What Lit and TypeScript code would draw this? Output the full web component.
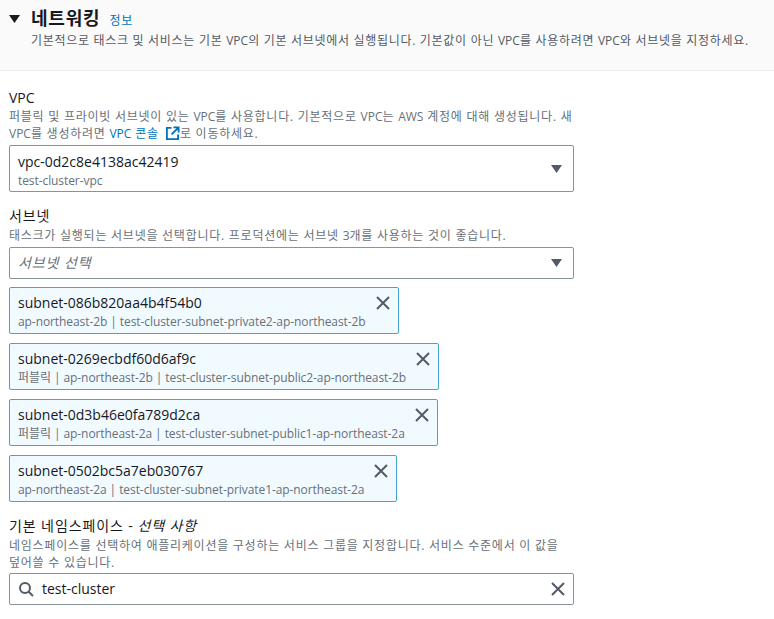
import { LitElement, html, css } from "lit";
import { customElement } from "lit/decorators.js";

const caret = html`<svg class="caret" width="11" height="8" viewBox="0 0 12 8" preserveAspectRatio="none"><path d="M0 0h12L6 8z" fill="currentColor"/></svg>`;
const closeIcon = html`<svg class="x" width="16" height="16" viewBox="0 0 16 16"><path d="M2 2l12 12M14 2L2 14" fill="none" stroke="#545b64" stroke-width="2"/></svg>`;

/* Hangul runs get their own tracking; Latin runs keep the font's natural spacing. */
const k = (text: string) =>
  text.split(/([A-Za-z0-9-]+)/).map((part, i) => (i % 2 ? part : html`<span class="k">${part}</span>`));

const tokens = [
  ["subnet-086b820aa4b4f54b0", "ap-northeast-2b | test-cluster-subnet-private2-ap-northeast-2b"],
  ["subnet-0269ecbdf60d6af9c", "퍼블릭 | ap-northeast-2b | test-cluster-subnet-public2-ap-northeast-2b"],
  ["subnet-0d3b46e0fa789d2ca", "퍼블릭 | ap-northeast-2a | test-cluster-subnet-public1-ap-northeast-2a"],
  ["subnet-0502bc5a7eb030767", "ap-northeast-2a | test-cluster-subnet-private1-ap-northeast-2a"],
];

@customElement("app-root")
export class AppRoot extends LitElement {
  static styles = css`
    :host {
      display: block;
      width: 774px;
      height: 619px;
      overflow: hidden;
      background: #fff;
      color: #16191f;
      font-family: "Open Sans", "Noto Sans CJK KR", sans-serif;
      font-size: 14px;
      line-height: 20px;
    }
    .k { letter-spacing: var(--ks, 0); }
    .head {
      box-sizing: border-box;
      height: 71px;
      background: #fafafa;
      border-bottom: 1px solid #eaeded;
      display: flex;
      padding: 6px 0 0 9px;
      gap: 11px;
    }
    .head .caret { color: #16191f; margin-top: 9px; flex: none; }
    .title-row { display: flex; align-items: baseline; gap: 9px; height: 24px; }
    .title { font-size: 18px; font-weight: 700; line-height: 24px; --ks: 0.8px; }
    .info { font-size: 12px; color: #0073bb; line-height: 16px; --ks: 0.8px; }
    .head-desc { font-size: 12px; line-height: 16px; color: #545b64; margin-top: 3px; white-space: nowrap; --ks: 0.7px; }
    .body { padding: 17px 0 0 9px; width: 565px; display: flex; flex-direction: column; }
    .label { line-height: 20px; --ks: 0.9px; }
    .label i { font-style: italic; }
    .desc { font-size: 12px; line-height: 17px; color: #687078; --ks: 0.75px; }
    .desc a { color: #0073bb; text-decoration: none; }
    .ext { vertical-align: -3px; margin-left: 3px; }
    .select, .input {
      box-sizing: border-box;
      border: 1px solid #879596;
      border-radius: 2px;
      display: flex;
      align-items: center;
      justify-content: space-between;
      background: #fff;
    }
    .select { padding: 0 11px 0 8px; }
    .select .caret { color: #545b64; flex: none; }
    .vpc { height: 47px; margin-top: 3px; }
    .vpc .two { padding-top: 3px; }
    .vpc .caret { margin-top: 1px; }
    .two { display: flex; flex-direction: column; }
    .main { line-height: 20px; }
    .sub { font-size: 12px; line-height: 16px; color: #687078; white-space: nowrap; margin-top: 1px; letter-spacing: -0.08px; }
    .gap-label { margin-top: 14px; }
    .after { margin-top: 1px; }
    .placeholder { height: 32px; margin-top: 3px; font-style: italic; color: #687078; --ks: 0.9px; }
    .tokens { display: flex; flex-direction: column; gap: 9px; margin-top: 8px; align-items: flex-start; }
    .token {
      box-sizing: border-box;
      height: 47px;
      border: 1px solid #44a5d0;
      border-radius: 2px;
      background: #f1faff;
      padding: 5px 7px 0 8px;
      display: flex;
      gap: 9px;
      align-items: flex-start;
    }
    .token .x { flex: none; margin-top: 2px; }
    .input { height: 32px; margin-top: 2px; padding: 0 7px 0 8px; gap: 8px; justify-content: flex-start; }
    .input .val { flex: 1; }
    .input .x, .input .search { flex: none; }
  `;

  render() {
    return html`
      <div class="head">
        ${caret}
        <div>
          <div class="title-row"><span class="title">${k("네트워킹")}</span><span class="info">${k("정보")}</span></div>
          <div class="head-desc">${k("기본적으로 태스크 및 서비스는 기본 VPC의 기본 서브넷에서 실행됩니다. 기본값이 아닌 VPC를 사용하려면 VPC와 서브넷을 지정하세요.")}</div>
        </div>
      </div>
      <div class="body">
        <div class="label">VPC</div>
        <div class="desc">${k("퍼블릭 및 프라이빗 서브넷이 있는 VPC를 사용합니다. 기본적으로 VPC는 AWS 계정에 대해 생성됩니다. 새 VPC를 생성하려면 ")}<a>${k("VPC 콘솔")} <svg class="ext" width="15" height="15" viewBox="0 0 16 16"><path d="M7 2H2v12h12V9M9 1.5h5.5V7M14 2L7 9" fill="none" stroke="#0073bb" stroke-width="2"/></svg></a>${k("로 이동하세요.")}</div>
        <div class="select vpc">
          <div class="two"><span class="main">vpc-0d2c8e4138ac42419</span><span class="sub">test-cluster-vpc</span></div>
          ${caret}
        </div>
        <div class="label gap-label">${k("서브넷")}</div>
        <div class="desc after">${k("태스크가 실행되는 서브넷을 선택합니다. 프로덕션에는 서브넷 3개를 사용하는 것이 좋습니다.")}</div>
        <div class="select placeholder"><span>${k("서브넷 선택")}</span>${caret}</div>
        <div class="tokens">
          ${tokens.map(([a, b]) => html`
            <div class="token">
              <div class="two"><span class="main">${a}</span><span class="sub">${b}</span></div>
              ${closeIcon}
            </div>`)}
        </div>
        <div class="label gap-label">${k("기본 네임스페이스 - ")}<i>${k("선택 사항")}</i></div>
        <div class="desc after">${k("네임스페이스를 선택하여 애플리케이션을 구성하는 서비스 그룹을 지정합니다. 서비스 수준에서 이 값을 덮어쓸 수 있습니다.")}</div>
        <div class="input">
          <svg class="search" width="16" height="16" viewBox="0 0 16 16"><circle cx="7" cy="7" r="5" fill="none" stroke="#545b64" stroke-width="2"/><path d="M10.5 10.5L15 15" stroke="#545b64" stroke-width="2" fill="none"/></svg>
          <span class="val">test-cluster</span>
          ${closeIcon}
        </div>
      </div>
    `;
  }
}
